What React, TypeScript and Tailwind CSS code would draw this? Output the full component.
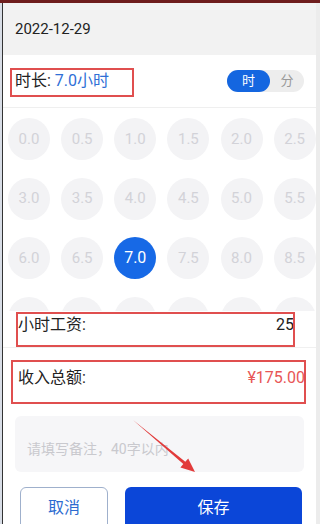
import React from "react";

const hours = [
  "0.0", "0.5", "1.0", "1.5", "2.0", "2.5",
  "3.0", "3.5", "4.0", "4.5", "5.0", "5.5",
  "6.0", "6.5", "7.0", "7.5", "8.0", "8.5",
];

const selected = "7.0";

export default function App() {
  return (
    <div
      className="relative w-[320px] h-[524px] overflow-hidden bg-white flex flex-col"
      style={{ fontFamily: 'Roboto, "Noto Sans CJK SC", sans-serif' }}
    >
      <div className="h-[3px] bg-[#6e1d1d] shrink-0" />
      <div className="flex flex-1 min-h-0">
        <div className="w-[2px] bg-[#d8dde6]" />
        <div className="w-px bg-[#333]" />

        {/* sheet */}
        <div className="flex-1 flex flex-col min-w-0">
          <div className="h-[52px] shrink-0 bg-[#f2f2f2] flex items-center pl-[12px] text-[15px] text-[#222]">
            2022-12-29
          </div>

          <div className="h-[53px] shrink-0 flex items-center justify-between pl-[12px] pr-[12px] border-b border-[#efefef]">
            <div className="text-[16px] text-[#222]">
              时长: <span className="text-[#2f6fd6]">7.0小时</span>
            </div>
            <div className="flex h-[22px] w-[77px] rounded-full bg-[#ededed] text-[13px]">
              <div className="w-[43px] rounded-full bg-[#1466e0] text-white flex items-center justify-center">
                时
              </div>
              <div className="flex-1 flex items-center justify-center text-[#999]">分</div>
            </div>
          </div>

          <div className="h-[203px] shrink-0 overflow-hidden">
            <div className="grid grid-cols-6 gap-x-[10.8px] gap-y-[17.5px] pl-[5px] pt-[10px]">
              {hours.map((h) => (
                <div
                  key={h}
                  className={
                    h === selected
                      ? "w-[42px] h-[42px] rounded-full bg-[#1769e6] text-white flex items-center justify-center text-[16px]"
                      : "w-[42px] h-[42px] rounded-full bg-[#f3f3f5] text-[#d2d2d8] flex items-center justify-center text-[15px]"
                  }
                >
                  {h}
                </div>
              ))}
              {/* next row, scrolled out of view */}
              {[0, 1, 2, 3, 4, 5].map((i) => (
                <div key={i} className="w-[42px] h-[42px] rounded-full bg-[#f3f3f5]" />
              ))}
            </div>
          </div>

          <div className="h-[37px] shrink-0 flex items-start justify-between pt-[2px] pl-[15px] pr-[22px] border-b border-[#f0f0f0] text-[16px] text-[#222]">
            <span>小时工资:</span>
            <span>25</span>
          </div>

          <div className="h-[55px] shrink-0 flex items-center justify-between pt-[4px] pl-[15px] pr-[11px] text-[16px] text-[#222]">
            <span>收入总额:</span>
            <span className="text-[#e85656]">¥175.00</span>
          </div>

          <div className="mx-[12px] mt-[13px] h-[56px] shrink-0 rounded-[6px] bg-[#f6f6f8] flex items-center pt-[10px] pl-[12px] text-[14px] text-[#c9c9ce]">
            请填写备注，40字以内
          </div>

          <div className="flex gap-[17px] pl-[17px] pr-[14px] mt-[15px]">
            <button className="w-[88px] h-[44px] rounded-[6px] border border-[#9fb0cc] text-[#2d6bd0] text-[16px] pb-[2px]">
              取消
            </button>
            <button className="w-[177px] h-[44px] rounded-[6px] bg-[#0b46d8] text-white text-[16px] pb-[2px]">
              保存
            </button>
          </div>
        </div>

        <div className="w-[4px] bg-[#ececec]" />
      </div>

      {/* annotations */}
      <div className="absolute left-[10px] top-[68px] w-[124px] h-[29px] border-2 border-[#e04f4f]" />
      <div className="absolute left-[16px] top-[312px] w-[279px] h-[35px] border-2 border-[#e04f4f]" />
      <div className="absolute left-[11px] top-[360px] w-[295px] h-[44px] border-2 border-[#e04f4f]" />
      <svg className="absolute left-0 top-0" width="320" height="524" viewBox="0 0 320 524">
        <polygon
          points="133,420 185.3,461.8 188.2,458.4 195,472 180.4,467.6 183.3,464.1"
          fill="#e23b3b"
        />
      </svg>
    </div>
  );
}
